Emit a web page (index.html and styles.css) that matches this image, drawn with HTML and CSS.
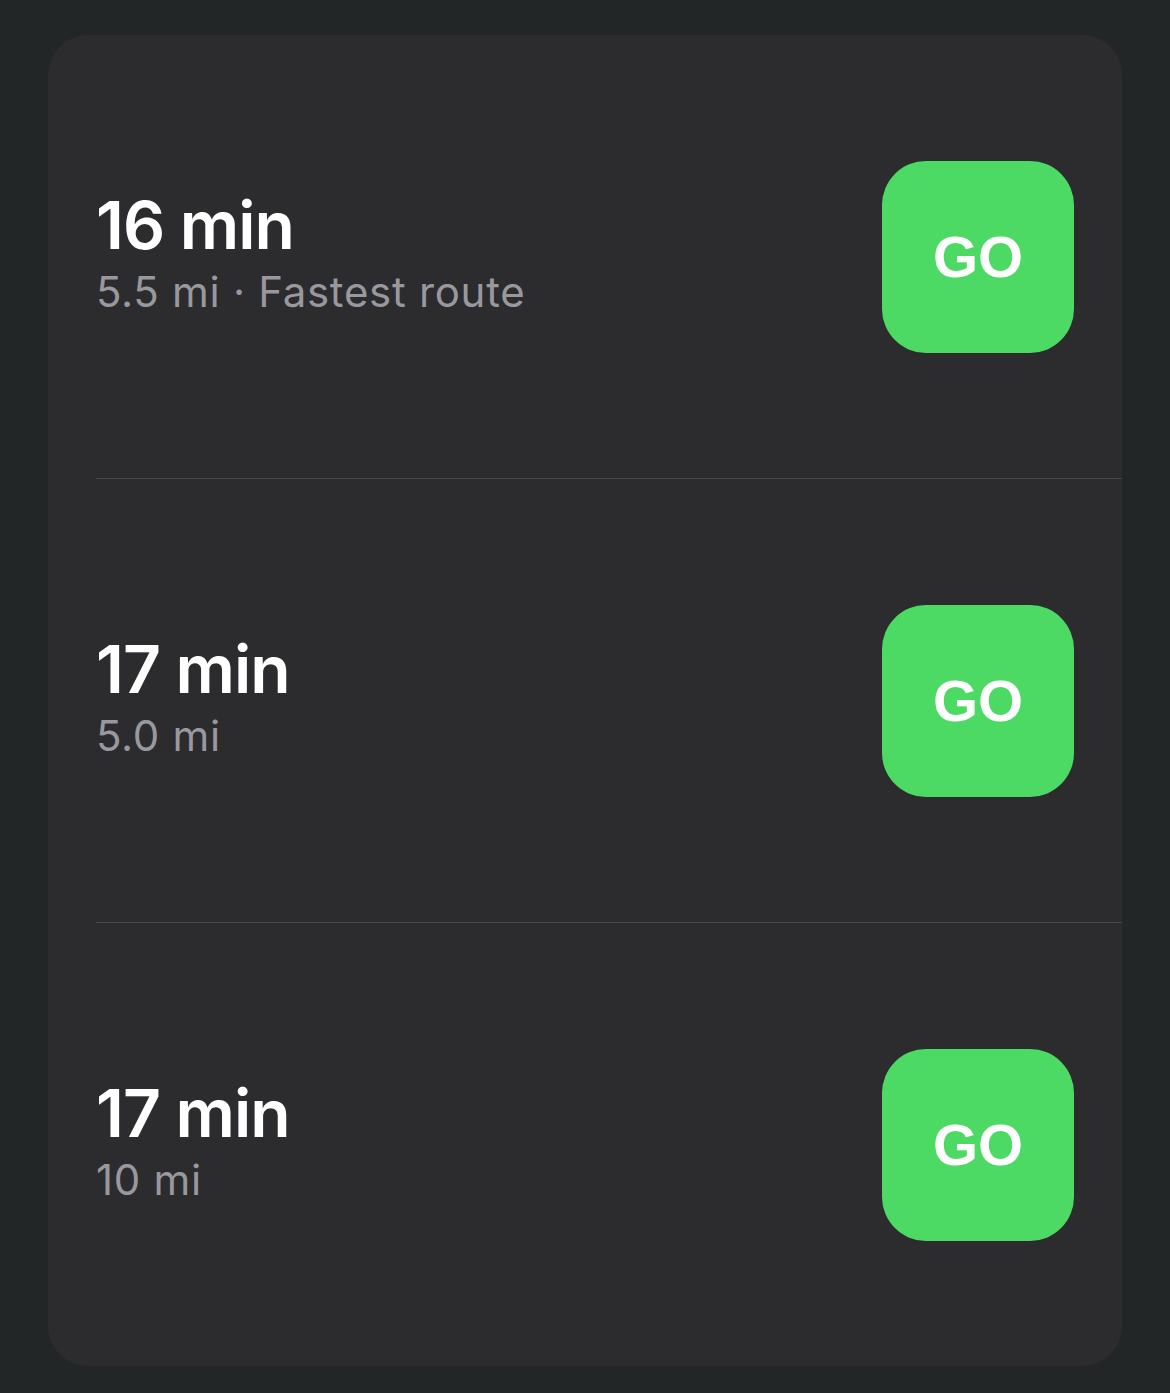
FILE: index.html
```html
<!DOCTYPE html>
<html lang="en">
<head>
    <meta charset="UTF-8">
    <meta name="viewport" content="width=device-width, initial-scale=1.0">
    <title>Routes</title>
    <link rel="stylesheet" href="styles.css">
</head>
<body>
    <div class="card">
        <div class="route">
            <div class="info">
                <div class="time">16 min</div>
                <div class="detail">5.5 mi · Fastest route</div>
            </div>
            <button class="go" type="button">GO</button>
        </div>
        <div class="route">
            <div class="info">
                <div class="time">17 min</div>
                <div class="detail">5.0 mi</div>
            </div>
            <button class="go" type="button">GO</button>
        </div>
        <div class="route">
            <div class="info">
                <div class="time">17 min</div>
                <div class="detail">10 mi</div>
            </div>
            <button class="go" type="button">GO</button>
        </div>
    </div>
</body>
</html>
```

FILE: styles.css
```css
body {
    margin: 0;
    padding: 35px 48px 27px;
    background: #222627;
    font-family: Inter, "Noto Sans", sans-serif;
}
.card {
    height: 1331px;
    background: #2c2c2e;
    border-radius: 40px;
    display: flex;
    flex-direction: column;
    overflow: hidden;
}
.route {
    flex: 1;
    display: flex;
    align-items: center;
    justify-content: space-between;
    margin-left: 48px;
    padding-right: 48px;
}
.route + .route {
    border-top: 1px solid #48484b;
}
.info {
    margin-top: -2px;
}
.time {
    color: #fff;
    font-size: 66px;
    font-weight: 600;
    line-height: 72px;
    letter-spacing: -1px;
}
.detail {
    color: #98989e;
    font-size: 42px;
    line-height: 62px;
    letter-spacing: 0.7px;
}
.go {
    width: 192px;
    height: 192px;
    border: none;
    border-radius: 44px;
    background: #4cd964;
    color: #fff;
    font-family: "Liberation Sans", Arial, sans-serif;
    font-size: 58px;
    font-weight: 700;
    padding: 0;
}
```
